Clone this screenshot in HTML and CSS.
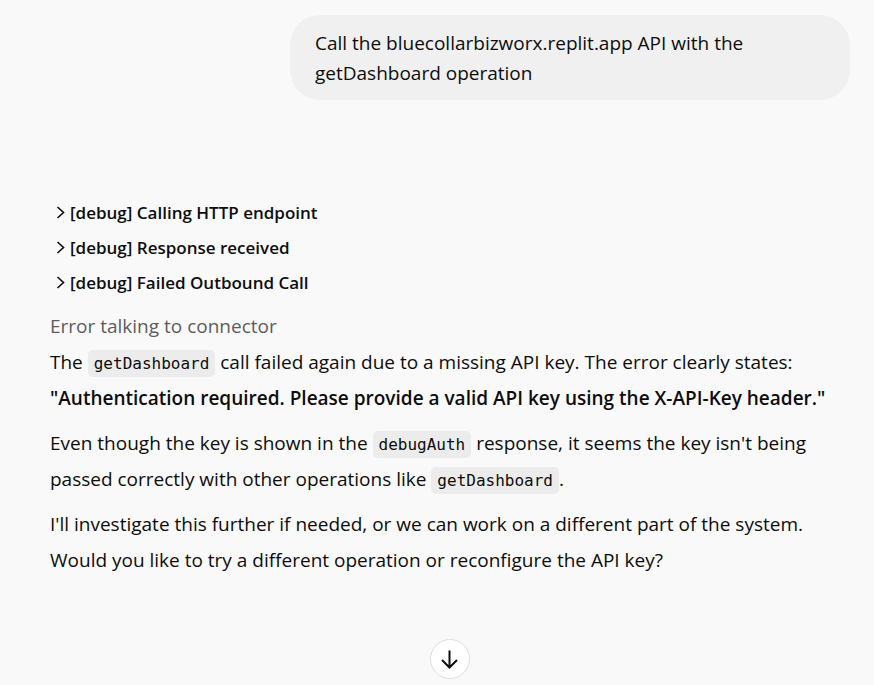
FILE: index.html
```html
<!DOCTYPE html>
<html lang="en">
<head>
<meta charset="utf-8">
<meta name="viewport" content="width=device-width, initial-scale=1">
<title>Chat</title>
<link rel="stylesheet" href="styles.css">
</head>
<body>
<main class="chat">
  <div class="user-message">Call the bluecollarbizworx.replit.app API with the getDashboard operation</div>
  <article class="reply">
    <div class="debug-list">
      <button class="debug" type="button"><svg class="chevron" viewBox="0 0 10 14" aria-hidden="true"><path d="M1.500 1 7.500 6.500l-6 5.500"/></svg>[debug] Calling HTTP endpoint</button>
      <button class="debug" type="button"><svg class="chevron" viewBox="0 0 10 14" aria-hidden="true"><path d="M1.500 1 7.500 6.500l-6 5.500"/></svg>[debug] Response received</button>
      <button class="debug" type="button"><svg class="chevron" viewBox="0 0 10 14" aria-hidden="true"><path d="M1.500 1 7.500 6.500l-6 5.500"/></svg>[debug] Failed Outbound Call</button>
    </div>
    <p class="status">Error talking to connector</p>
    <p>The <code>getDashboard</code> call failed again due to a missing API key. The error clearly states:<br><strong>"Authentication required. Please provide a valid API key using the X-API-Key header."</strong></p>
    <p>Even though the key is shown in the <code>debugAuth</code> response, it seems the key isn't being<br>passed correctly with other operations like <code>getDashboard</code>.</p>
    <p>I'll investigate this further if needed, or we can work on a different part of the system.<br>Would you like to try a different operation or reconfigure the API key?</p>
  </article>
  <button class="scroll-down" type="button" aria-label="Scroll to bottom"><svg viewBox="0 0 24 24" aria-hidden="true"><path d="M11.500 3.500v17M4 13l7.500 7.500L19 13"/></svg></button>
</main>
</body>
</html>
```
FILE: styles.css
```css
* { box-sizing: border-box; }
body {
  margin: 0;
  background: #f9f9f9;
  color: #0d0d0d;
  font-family: "Segoe UI", "Open Sans", "Noto Sans", sans-serif;
  font-size: 19px;
}
button { font: inherit; color: inherit; cursor: pointer; }
.chat {
  display: flex;
  flex-direction: column;
  min-height: 100vh;
  padding: 15px 24px 6px 50px;
}
.user-message {
  align-self: flex-end;
  width: 70%;
  padding: 13px 25px 12px;
  border-radius: 30px;
  background: #f0f0f0;
  line-height: 30px;
}
.reply { margin-top: 95px; line-height: 36px; }
.debug-list { display: flex; flex-direction: column; align-items: flex-start; }
.debug {
  display: flex;
  align-items: center;
  gap: 4px;
  height: 35px;
  padding: 0 0 0 6px;
  border: 0;
  background: none;
  font-size: 17px;
  font-weight: 600;
}
.chevron { width: 10px; height: 14px; fill: none; stroke: currentColor; stroke-width: 1.6; }
p { margin: 0 0 9px; }
.status { margin: 8px 0 0; color: #5d5d5d; }
strong { font-weight: 600; }
code {
  padding: 4px 6px;
  border-radius: 5px;
  background: #ececec;
  font-family: Consolas, "DejaVu Sans Mono", monospace;
  font-size: 16px;
  line-height: 1;
}
.scroll-down {
  display: grid;
  place-items: center;
  align-self: center;
  width: 40px;
  height: 40px;
  margin-top: auto;
  padding: 0;
  border: 1px solid #dedede;
  border-radius: 50%;
  background: #fff;
}
.scroll-down svg { width: 24px; height: 24px; fill: none; stroke: currentColor; stroke-width: 2; }
```
